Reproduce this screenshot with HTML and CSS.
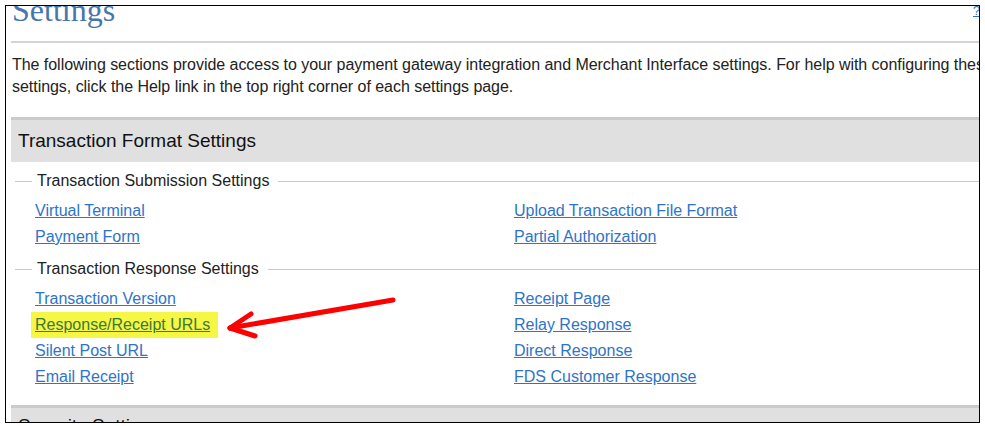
FILE: index.html
```html
<!DOCTYPE html>
<html>
<head>
    <title>Settings</title>
    <link rel="stylesheet" href="styles.css">
</head>
<body>
    <div class="frame">
        <div class="page">
            <div class="title-row">
                <h1>Settings</h1>
                <a class="help" href="#">?</a>
            </div>
            <div class="divider"></div>
            <p class="intro">The following sections provide access to your payment gateway integration and Merchant Interface settings. For help with configuring these settings, click the Help link in the top right corner of each settings page.</p>

            <div class="section-bar">Transaction Format Settings</div>

            <div class="legend"><span>Transaction Submission Settings</span></div>
            <div class="links">
                <a href="#">Virtual Terminal</a>
                <a href="#">Upload Transaction File Format</a>
                <a href="#">Payment Form</a>
                <a href="#">Partial Authorization</a>
            </div>

            <div class="legend"><span>Transaction Response Settings</span></div>
            <div class="links">
                <a href="#">Transaction Version</a>
                <a href="#">Receipt Page</a>
                <span class="marked"><a href="#">Response/Receipt URLs</a></span>
                <a href="#">Relay Response</a>
                <a href="#">Silent Post URL</a>
                <a href="#">Direct Response</a>
                <a href="#">Email Receipt</a>
                <a href="#">FDS Customer Response</a>
            </div>

            <div class="section-bar bottom">Security Settings</div>
        </div>

        <!-- annotation arrow drawn over the page -->
        <svg class="arrow" width="985" height="426" viewBox="0 0 985 426">
            <g stroke="#f00" stroke-width="5" stroke-linecap="round" fill="none">
                <line x1="393" y1="300" x2="230" y2="328"/>
                <line x1="230" y1="328" x2="251" y2="314"/>
                <line x1="230" y1="328" x2="255" y2="336"/>
            </g>
        </svg>
    </div>
</body>
</html>
```

FILE: styles.css
```css
body {
    margin: 5px;
    font-family: "Liberation Sans", Arial, sans-serif;
    color: #222;
}
.frame {
    position: relative;
    height: 416px;
    border: 1px solid #000;
    overflow: hidden;
    background: #fff;
}
.page {
    width: 1100px;
}
.title-row {
    display: flow-root;
    height: 35px;
}
h1 {
    margin: -12px 0 0 6px;
    font-family: "Liberation Serif", "Times New Roman", serif;
    font-size: 32px;
    font-weight: normal;
    line-height: 32px;
    color: #4776ad;
}
.help {
    position: absolute;
    top: -3px;
    left: 967px;
    font-size: 13px;
    color: #2e74c9;
}
.divider {
    margin-left: 5px;
    border-top: 2px solid #d4d4d4;
}
.intro {
    width: 1000px;
    margin: 11px 0 0 6px;
    font-size: 16px;
    line-height: 22px;
    letter-spacing: -0.04px;
}
.section-bar {
    margin: 19px 0 0 5px;
    height: 42px;
    line-height: 42px;
    padding-left: 7px;
    border-top: 3px solid #cbcbcb;
    background: #e0e0e0;
    font-size: 19px;
    color: #111;
}
.section-bar.bottom {
    margin-top: 15px;
    line-height: 36px;
}
.legend {
    display: flex;
    align-items: center;
    gap: 5px;
    margin: 8px 0 0 9px;
    height: 22px;
    font-size: 16px;
}
.legend::before {
    content: "";
    width: 17px;
    border-top: 1px solid #c8c8c8;
}
.legend::after {
    content: "";
    flex: 1;
    border-top: 1px solid #c8c8c8;
}
.legend span {
    padding-right: 4px;
}
.links {
    display: grid;
    grid-template-columns: 479px 1fr;
    margin: 6px 0 6px 29px;
    font-size: 16px;
    line-height: 26px;
}
.links a {
    justify-self: start;
    color: #2e74c9;
}
.marked {
    justify-self: start;
    margin-left: -4px;
    padding: 0 8px 0 4px;
    background: #f6f644;
}
.marked a {
    color: #3b7a34;
}
.arrow {
    position: absolute;
    top: -6px;
    left: -6px;
    pointer-events: none;
}
```
